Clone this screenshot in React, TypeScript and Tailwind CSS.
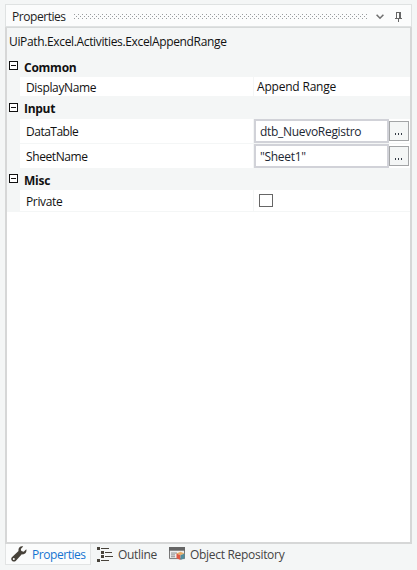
import type { ReactNode } from 'react';

function Toggle() {
  return (
    <svg width="9" height="9" viewBox="0 0 9 9" shapeRendering="crispEdges" className="mb-[2px] ml-[2px] shrink-0">
      <rect x="0.5" y="0.5" width="8" height="8" fill="#fff" stroke="#111" />
      <path d="M2 4.5h5" stroke="#111" />
    </svg>
  );
}

function Category({ name, className, spacing }: { name: string; className: string; spacing: string }) {
  return (
    <div className={`flex items-center bg-[#f4f6f6] ${className}`}>
      <Toggle />
      <span className={`ml-[6px] pt-[2px] font-bold whitespace-nowrap ${spacing}`}>{name}</span>
    </div>
  );
}

function Row({ name, height, spacing, children }: { name: string; height: string; spacing: string; children: ReactNode }) {
  return (
    <div className={`flex ${height}`}>
      <div className="w-[13px] shrink-0 bg-[#f4f6f6]" />
      <div className="flex w-[233px] shrink-0 items-center border-b border-[#f4f6f6] pl-[6px]">
        <span className={`pt-[2px] whitespace-nowrap ${spacing}`}>{name}</span>
      </div>
      <div className="flex min-w-0 flex-1 items-center border-l border-b border-[#f4f6f6]">{children}</div>
    </div>
  );
}

function Expression({ value, spacing }: { value: string; spacing: string }) {
  return (
    <div className="flex h-6 w-full items-center">
      <div className="flex h-6 w-[135px] shrink-0 items-center border-2 border-[#d1d2d8] pl-1 text-[#1c2733]">
        <span className={`pt-[2px] whitespace-nowrap ${spacing}`}>{value}</span>
      </div>
      <button className="flex h-5 w-5 shrink-0 items-center justify-center border border-[#a3a5a7] bg-[#f4f6f6]">
        <svg width="8" height="2" viewBox="0 0 8 2" className="mt-[6px]" shapeRendering="crispEdges">
          <path d="M0 0h1v2H0zM3 0h1v2H3zM6 0h1v2H6z" fill="#333b46" />
        </svg>
      </button>
    </div>
  );
}

export default function App() {
  return (
    <div className="flex h-[570px] w-[417px] flex-col overflow-hidden bg-[#f4f6f6] pt-1 pl-[5px] font-['Open_Sans','Noto_Sans',sans-serif] text-[12px] leading-[16px] text-[#111]">
      <div className="flex h-[23px] w-[407px] items-center border border-[#dfe2e2] bg-[#fbfcfc] pt-[2px] pl-[6px]">
        <span className="w-[62px] shrink-0 whitespace-nowrap tracking-[-0.45px] text-[#222]">Properties</span>
        <svg width="293" height="5" className="shrink-0" shapeRendering="crispEdges">
          <defs>
            <pattern id="grip" width="4" height="4" patternUnits="userSpaceOnUse">
              <path d="M0 0h1v1H0zM2 2h1v1H2z" fill="#999c9f" />
            </pattern>
          </defs>
          <rect width="293" height="5" fill="url(#grip)" />
        </svg>
        <svg width="8" height="6" viewBox="0 0 8 6" className="ml-[9px] shrink-0">
          <path d="M0.6 0.8 4 4.2 7.4 0.8" fill="none" stroke="#717171" strokeWidth="1.6" />
        </svg>
        <svg width="8" height="10" viewBox="0 0 8 10" className="ml-[11px] shrink-0" shapeRendering="crispEdges">
          <path d="M1 0h5v1H1zM1 0h1v6H1zM4 0h2v6H4zM0 6h7v1H0zM3 7h1v3H3z" fill="#666" />
        </svg>
      </div>
      <div className="flex h-[517px] w-[407px] flex-col border-t border-r-2 border-b-2 border-l-2 border-t-[#d6d9d9] border-r-[#d6d7d7] border-b-[#d6d7d7] border-l-[#d6d7d7] bg-white">
        <div className="flex h-7 shrink-0 items-center bg-[#f4f6f6] pl-[2px]">
          <span className="whitespace-nowrap tracking-[-0.35px]">UiPath.Excel.Activities.ExcelAppendRange</span>
        </div>
        <Category name="Common" className="h-[21px]" spacing="tracking-[-0.25px]" />
        <Row name="DisplayName" height="h-[20px]" spacing="tracking-[-0.35px]">
          <span className="pt-[1px] pl-[3px] whitespace-nowrap tracking-[-0.2px]">Append Range</span>
        </Row>
        <Category name="Input" className="h-[22px]" spacing="tracking-[-0.3px]" />
        <Row name="DataTable" height="h-[25px]" spacing="tracking-[-0.5px]">
          <Expression value="dtb_NuevoRegistro" spacing="tracking-[-0.3px]" />
        </Row>
        <Row name="SheetName" height="h-[25px]" spacing="tracking-[-0.4px]">
          <Expression value={'"Sheet1"'} spacing="tracking-[-0.3px]" />
        </Row>
        <Category name="Misc" className="h-[21px]" spacing="tracking-[-0.2px]" />
        <Row name="Private" height="h-[22px]" spacing="tracking-[-0.35px]">
          <span className="ml-[5px] h-[13px] w-[14px] border border-[#666]" />
        </Row>
      </div>
      <div className="flex h-[21px] text-[#444]">
        <div className="flex w-[86px] items-center border-r border-b border-l border-[#e2e4e4] bg-[#fbfcfc] pl-[5px]">
          <svg width="16" height="16" viewBox="0 0 16 16" className="shrink-0">
            <path d="M15.3 3.2 12.7 5.7 10.3 5.1 9.8 2.9 12.2.5C9.6-.3 7 1.6 7.5 4.9L.9 11.2c-2.2 2.5 1.3 5.8 3.8 3.7l6.1-6.6c3.1.6 5.3-2 4.5-5.1ZM2.8 12.1a1 1 0 1 1 0 2 1 1 0 0 1 0-2Z" fill="#47423a" fillRule="evenodd" />
          </svg>
          <span className="ml-[5px] pt-[2px] whitespace-nowrap tracking-[-0.45px] text-[#1674d1]">Properties</span>
        </div>
        <svg width="17" height="15" viewBox="0 0 17 15" className="mt-[3px] ml-[6px] shrink-0" shapeRendering="crispEdges">
          <path d="M0 0h3v3H0zM4 1h8v1H4zM4 4h3v3H4zM8 5h7v1H8zM4 8h3v3H4zM8 9h8v1H8zM0 12h3v3H0zM4 13h8v1H4z" fill="#47423a" />
        </svg>
        <span className="mt-[3px] ml-[4px] w-[51px] whitespace-nowrap tracking-[-0.3px]">Outline</span>
        <svg width="16" height="13" viewBox="0 0 16 14" preserveAspectRatio="none" className="mt-[3px] shrink-0">
          <path d="M0.5.5h15v12H.5z" fill="#eceeee" stroke="#737373" />
          <path d="M0 0h16v4H0z" fill="#656565" />
          <path d="M2 6.5h6M2 8.5h4M2 10.5h4" stroke="#888" />
          <path d="m11.5 5 4 2-4 2-4-2Z" fill="#e9ad67" />
          <path d="m7.5 7 4 2v5l-4-2Z" fill="#df5944" />
          <path d="m11.5 9 4-2v5l-4 2Z" fill="#518d9d" />
        </svg>
        <span className="mt-[3px] ml-[5px] whitespace-nowrap tracking-[-0.3px]">Object Repository</span>
      </div>
    </div>
  );
}
